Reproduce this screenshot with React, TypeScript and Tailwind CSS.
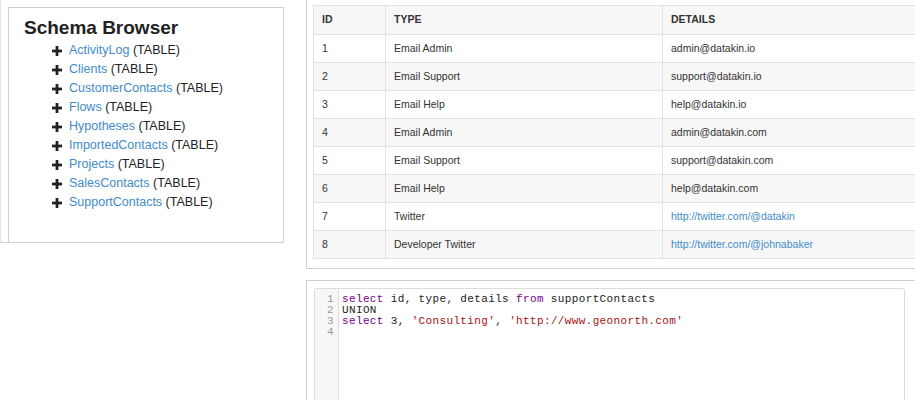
const tables = [
  "ActivityLog",
  "Clients",
  "CustomerContacts",
  "Flows",
  "Hypotheses",
  "ImportedContacts",
  "Projects",
  "SalesContacts",
  "SupportContacts",
];

type Row = { id: number; type: string; details: string; link?: boolean };

const rows: Row[] = [
  { id: 1, type: "Email Admin", details: "admin@datakin.io" },
  { id: 2, type: "Email Support", details: "support@datakin.io" },
  { id: 3, type: "Email Help", details: "help@datakin.io" },
  { id: 4, type: "Email Admin", details: "admin@datakin.com" },
  { id: 5, type: "Email Support", details: "support@datakin.com" },
  { id: 6, type: "Email Help", details: "help@datakin.com" },
  { id: 7, type: "Twitter", details: "http://twitter.com/@datakin", link: true },
  { id: 8, type: "Developer Twitter", details: "http://twitter.com/@johnabaker", link: true },
];

function Plus() {
  return (
    <svg width="10" height="10" viewBox="0 0 10 10" className="shrink-0">
      <rect x="3.6" y="0" width="2.8" height="10" fill="#222" />
      <rect x="0" y="3.6" width="10" height="2.8" fill="#222" />
    </svg>
  );
}

function SchemaBrowser() {
  return (
    <div className="flex h-[243px] w-[284px] flex-col border-b border-l border-[#e4e4e4] border-b-[#cfcfcf]">
      <div className="ml-[7px] mt-[7px] flex-1 border-l border-r border-t border-[#cfcfcf] pl-[15px] pt-[8px]">
        <div className="text-[19px] font-bold leading-[24px] text-[#222]">Schema Browser</div>
        <ul className="mt-[1px] pl-[28px]">
          {tables.map((t) => (
            <li key={t} className="flex h-[19px] items-center gap-[7px] text-[12.5px]">
              <Plus />
              <span>
                <a className="text-[#428bca]">{t}</a>
                <span className="text-[#222]"> (TABLE)</span>
              </span>
            </li>
          ))}
        </ul>
      </div>
    </div>
  );
}

function ResultsTable() {
  return (
    <div className="h-[269px] overflow-hidden border-b border-l border-[#cfcfcf] pl-[6px] pt-[5px]">
      <table className="w-[640px] table-fixed border-collapse text-[10.5px] text-[#333]">
        <colgroup>
          <col className="w-[72px]" />
          <col className="w-[277px]" />
          <col />
        </colgroup>
        <thead>
          <tr className="h-[29px] bg-[#f7f7f7]">
            <th className="border border-[#e2e2e2] px-[8px] text-left font-bold">ID</th>
            <th className="border border-[#e2e2e2] px-[8px] text-left font-bold">TYPE</th>
            <th className="border border-[#e2e2e2] px-[8px] text-left font-bold">DETAILS</th>
          </tr>
        </thead>
        <tbody>
          {rows.map((r, i) => (
            <tr key={r.id} className={i % 2 === 1 ? "h-[28px] bg-[#f7f7f7]" : "h-[28px] bg-white"}>
              <td className="border border-[#e2e2e2] px-[8px]">{r.id}</td>
              <td className="border border-[#e2e2e2] px-[8px]">{r.type}</td>
              <td className={r.link ? "border border-[#e2e2e2] px-[8px] text-[#428bca]" : "border border-[#e2e2e2] px-[8px]"}>
                {r.details}
              </td>
            </tr>
          ))}
        </tbody>
      </table>
    </div>
  );
}

function Editor() {
  const kw = "text-[#770088]";
  const str = "text-[#aa1111]";
  const mono = "font-['Liberation_Mono',monospace] text-[11px] leading-[11px] tracking-[0.36px]";
  return (
    <div className="mt-[11px] h-[120px] border-l border-t border-[#cfcfcf] pl-[7px] pr-[10px] pt-[7px]">
      <div className="flex h-[200px] rounded-[3px] border border-[#dcdcdc] bg-white">
        <div className={`w-[24px] border-r border-[#dddddd] bg-[#f7f7f7] pr-[4px] pt-[5px] text-right text-[#999] ${mono}`}>
          <div>1</div>
          <div>2</div>
          <div>3</div>
          <div>4</div>
        </div>
        <pre className={`pl-[3px] pt-[5px] text-[#222] ${mono}`}>
          <div>
            <span className={kw}>select</span> id, type, details <span className={kw}>from</span> supportContacts
          </div>
          <div>UNION</div>
          <div>
            <span className={kw}>select</span> 3, <span className={str}>'Consulting'</span>,{" "}
            <span className={str}>'http://www.geonorth.com'</span>
          </div>
          <div> </div>
        </pre>
      </div>
    </div>
  );
}

export default function App() {
  return (
    <div className="flex h-[400px] w-[915px] overflow-hidden bg-white font-['Liberation_Sans',Arial,sans-serif]">
      <div className="w-[306px] shrink-0">
        <SchemaBrowser />
      </div>
      <div className="min-w-0 flex-1 overflow-hidden">
        <ResultsTable />
        <Editor />
      </div>
    </div>
  );
}
